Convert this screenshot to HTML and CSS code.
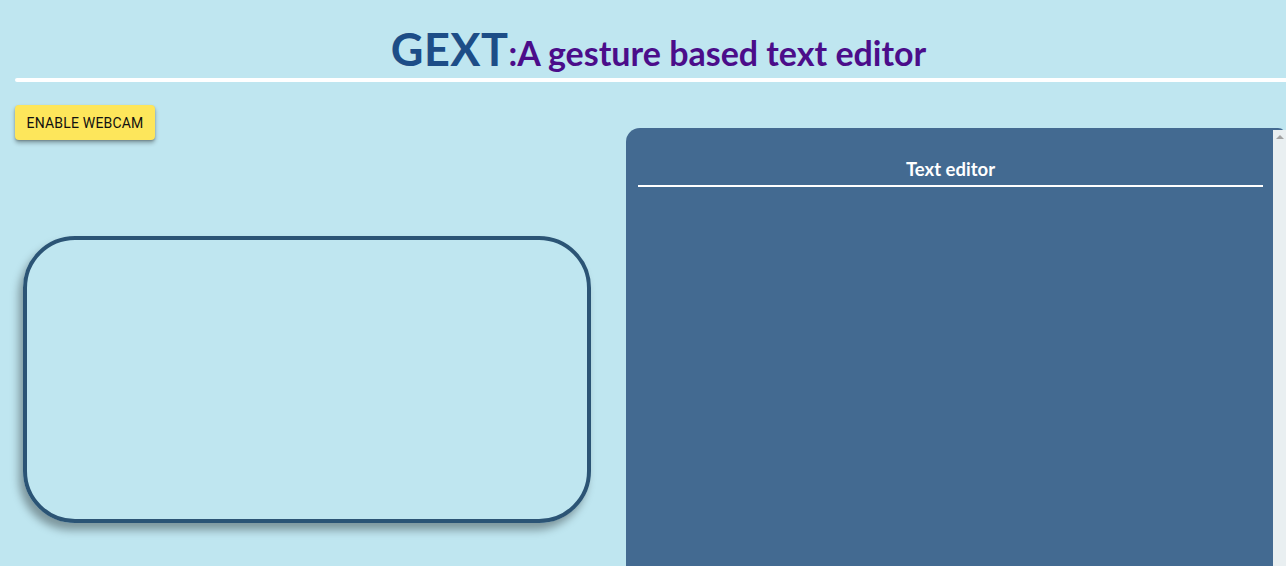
FILE: index.html
```html
<!DOCTYPE html>
<html>
<head>
<meta charset="utf-8">
<link rel="stylesheet" href="styles.css">
</head>
<body>
<header class="header">
  <h1 class="title"><span class="brand">GEXT</span><span class="tagline">:A gesture based text editor</span></h1>
  <div class="rule"></div>
</header>
<main class="main">
  <section class="left">
    <button class="cam-btn">ENABLE WEBCAM</button>
    <div class="cam-box"></div>
  </section>
  <section class="panel">
    <div class="panel-body">
      <h2 class="panel-title">Text editor</h2>
      <div class="panel-rule"></div>
    </div>
    <div class="scrollbar"><span class="arrow"></span></div>
  </section>
</main>
</body>
</html>
```
FILE: styles.css
```css
html, body {
  margin: 0;
  padding: 0;
  height: 100%;
  overflow: hidden;
}
body {
  background: #bfe6f0;
  font-family: Lato, "Noto Sans", sans-serif;
}
.header {
  padding-left: 15px;
}
.title {
  margin: 0;
  padding-top: 27px;
  height: 78px;
  box-sizing: border-box;
  text-align: center;
  font-weight: 700;
  line-height: 1;
  padding-left: 16px;
  white-space: nowrap;
}
.brand {
  color: #1d4d87;
  font-size: 45px;
  letter-spacing: 0.5px;
}
.tagline {
  color: #4b0d8a;
  font-size: 34px;
}
.rule {
  height: 4px;
  background: #ffffff;
  border-radius: 2px 0 0 2px;
}
.main {
  display: flex;
  align-items: flex-start;
}
.left {
  width: 626px;
  flex: none;
  padding-top: 23px;
}
.cam-btn {
  display: block;
  margin-left: 15px;
  width: 140px;
  height: 35px;
  border: none;
  border-radius: 4px;
  background: #fde65b;
  color: #111;
  font-family: Roboto, "Liberation Sans", sans-serif;
  font-weight: 400;
  font-size: 14px;
  letter-spacing: 0.2px;
  padding: 0;
  box-shadow: 0 3px 4px rgba(0, 0, 0, 0.3), 0 1px 2px rgba(0, 0, 0, 0.2);
}
.cam-box {
  margin: 96px 0 0 23px;
  width: 568px;
  height: 287px;
  box-sizing: border-box;
  border: 4px solid #2b5475;
  border-radius: 52px;
  box-shadow: -4px 7px 9px rgba(0, 0, 0, 0.35);
}
.panel {
  margin-top: 46px;
  flex: 1;
  height: 500px;
  display: flex;
  background: #436a91;
  border-radius: 14px 8px 0 0;
}
.panel-body {
  flex: 1;
  padding: 30px 10px 0 12px;
}
.panel-title {
  margin: 0;
  text-align: center;
  color: #ffffff;
  font-size: 18.5px;
  font-weight: 700;
  line-height: 22px;
  padding-bottom: 5px;
}
.panel-rule {
  height: 2px;
  background: #ffffff;
}
.scrollbar {
  width: 13px;
  flex: none;
  margin-top: 2px;
  background: #e9eff1;
  display: flex;
  justify-content: center;
  padding-top: 5px;
  box-sizing: border-box;
}
.arrow {
  width: 0;
  height: 0;
  border-left: 4px solid transparent;
  border-right: 4px solid transparent;
  border-bottom: 4px solid #a3a3a3;
}
```
